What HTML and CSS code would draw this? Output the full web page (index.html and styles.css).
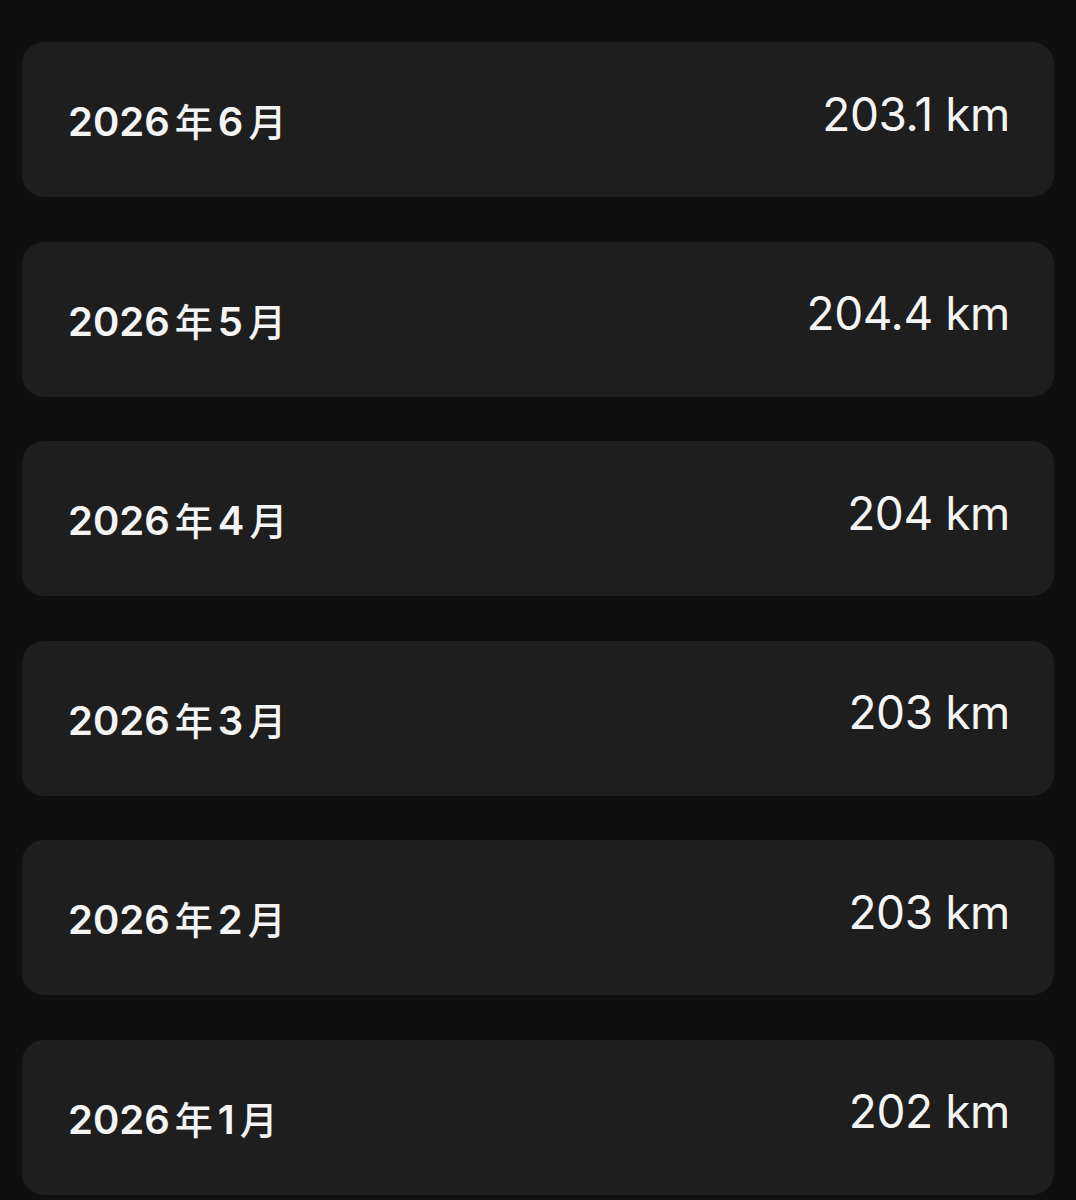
FILE: index.html
```html
<!DOCTYPE html>
<html lang="ja">
<head>
  <meta charset="UTF-8">
  <meta name="viewport" content="width=device-width, initial-scale=1.0">
  <title>月別距離</title>
  <link rel="stylesheet" href="styles.css">
</head>
<body>

<div class="month-list">
  <div class="month-row">
    <span class="month-label">2026<span class="kanji">年</span>6<span class="kanji">月</span></span>
    <span class="month-distance">203.1 km</span>
  </div>
  <div class="month-row">
    <span class="month-label">2026<span class="kanji">年</span>5<span class="kanji">月</span></span>
    <span class="month-distance">204.4 km</span>
  </div>
  <div class="month-row">
    <span class="month-label">2026<span class="kanji">年</span>4<span class="kanji">月</span></span>
    <span class="month-distance">204 km</span>
  </div>
  <div class="month-row">
    <span class="month-label">2026<span class="kanji">年</span>3<span class="kanji">月</span></span>
    <span class="month-distance">203 km</span>
  </div>
  <div class="month-row">
    <span class="month-label">2026<span class="kanji">年</span>2<span class="kanji">月</span></span>
    <span class="month-distance">203 km</span>
  </div>
  <div class="month-row">
    <span class="month-label">2026<span class="kanji">年</span>1<span class="kanji">月</span></span>
    <span class="month-distance">202 km</span>
  </div>
</div>

</body>
</html>
```

FILE: styles.css
```css
:root {
  --page-bg: #0f0f0f;
  --card-bg: #1e1e1e;
  --text: #f4f4f4;
}
body {
  margin: 0;
  padding: 0;
  background-color: var(--page-bg);
  color: var(--text);
  font-family: Inter, "Noto Sans CJK JP", sans-serif;
}
.month-list {
  display: flex;
  flex-direction: column;
  gap: 44.6px;
  padding: 42px 22px;
}
.month-row {
  display: flex;
  justify-content: space-between;
  align-items: center;
  height: 155px;
  padding: 0 44px 0 46px;
  background-color: var(--card-bg);
  border-radius: 22px;
  box-sizing: border-box;
}
.month-label {
  font-size: 40px;
  font-weight: 600;
  margin-top: 0;
}
.month-label .kanji {
  font-family: "Noto Sans CJK JP", sans-serif;
  font-weight: 500;
  font-size: 38px;
  margin: 0 5px;
}
.month-distance {
  font-size: 46px;
  font-weight: 400;
  letter-spacing: -0.4px;
  margin-top: -12px;
}
```
